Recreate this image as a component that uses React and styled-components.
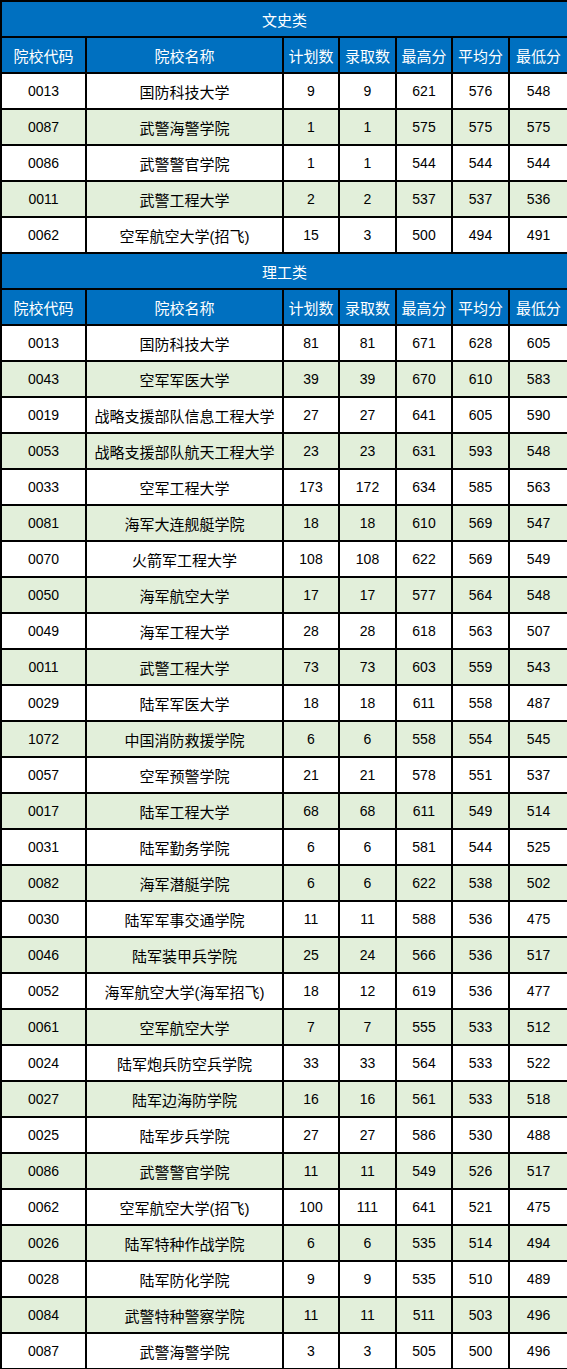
import React from "react";
import styled, { createGlobalStyle } from "styled-components";

const GlobalStyle = createGlobalStyle`
  html, body {
    margin: 0;
    padding: 0;
    background: #ffffff;
  }
  body {
    font-family: "Liberation Sans", "Noto Sans CJK SC", sans-serif;
  }
`;

const columns = ["院校代码", "院校名称", "计划数", "录取数", "最高分", "平均分", "最低分"];
const widths = [85, 197, 56, 57, 56, 57, 59];

const sections = [
  {
    title: "文史类",
    rows: [
      ["0013", "国防科技大学", 9, 9, 621, 576, 548],
      ["0087", "武警海警学院", 1, 1, 575, 575, 575],
      ["0086", "武警警官学院", 1, 1, 544, 544, 544],
      ["0011", "武警工程大学", 2, 2, 537, 537, 536],
      ["0062", "空军航空大学(招飞)", 15, 3, 500, 494, 491],
    ],
  },
  {
    title: "理工类",
    rows: [
      ["0013", "国防科技大学", 81, 81, 671, 628, 605],
      ["0043", "空军军医大学", 39, 39, 670, 610, 583],
      ["0019", "战略支援部队信息工程大学", 27, 27, 641, 605, 590],
      ["0053", "战略支援部队航天工程大学", 23, 23, 631, 593, 548],
      ["0033", "空军工程大学", 173, 172, 634, 585, 563],
      ["0081", "海军大连舰艇学院", 18, 18, 610, 569, 547],
      ["0070", "火箭军工程大学", 108, 108, 622, 569, 549],
      ["0050", "海军航空大学", 17, 17, 577, 564, 548],
      ["0049", "海军工程大学", 28, 28, 618, 563, 507],
      ["0011", "武警工程大学", 73, 73, 603, 559, 543],
      ["0029", "陆军军医大学", 18, 18, 611, 558, 487],
      ["1072", "中国消防救援学院", 6, 6, 558, 554, 545],
      ["0057", "空军预警学院", 21, 21, 578, 551, 537],
      ["0017", "陆军工程大学", 68, 68, 611, 549, 514],
      ["0031", "陆军勤务学院", 6, 6, 581, 544, 525],
      ["0082", "海军潜艇学院", 6, 6, 622, 538, 502],
      ["0030", "陆军军事交通学院", 11, 11, 588, 536, 475],
      ["0046", "陆军装甲兵学院", 25, 24, 566, 536, 517],
      ["0052", "海军航空大学(海军招飞)", 18, 12, 619, 536, 477],
      ["0061", "空军航空大学", 7, 7, 555, 533, 512],
      ["0024", "陆军炮兵防空兵学院", 33, 33, 564, 533, 522],
      ["0027", "陆军边海防学院", 16, 16, 561, 533, 518],
      ["0025", "陆军步兵学院", 27, 27, 586, 530, 488],
      ["0086", "武警警官学院", 11, 11, 549, 526, 517],
      ["0062", "空军航空大学(招飞)", 100, 111, 641, 521, 475],
      ["0026", "陆军特种作战学院", 6, 6, 535, 514, 494],
      ["0028", "陆军防化学院", 9, 9, 535, 510, 489],
      ["0084", "武警特种警察学院", 11, 11, 511, 503, 496],
      ["0087", "武警海警学院", 3, 3, 505, 500, 496],
    ],
  },
];

const Table = styled.table`
  width: 567px;
  table-layout: fixed;
  border-collapse: collapse;
  border: 2px solid #000;
`;

const Row = styled.tr`
  height: 36px;
  background: ${(p) => (p.$shade ? "#e2efda" : "#ffffff")};
`;

const HeadCell = styled.th`
  background: #0070c0;
  color: #ffffff;
  font-weight: normal;
  font-size: 15px;
  text-align: center;
  border: 2px solid #000;
  padding: 0;
`;

const Cell = styled.td`
  font-size: ${(p) => (p.$name ? "15px" : "14px")};
  color: #000;
  text-align: center;
  border: 2px solid #000;
  padding: 0;
  white-space: nowrap;
`;

export default function App() {
  return (
    <>
      <GlobalStyle />
      <Table>
        <colgroup>
          {widths.map((w, i) => (
            <col key={i} style={{ width: w }} />
          ))}
        </colgroup>
        <tbody>
          {sections.map((sec) => (
            <React.Fragment key={sec.title}>
              <Row>
                <HeadCell colSpan={7}>{sec.title}</HeadCell>
              </Row>
              <Row>
                {columns.map((c) => (
                  <HeadCell key={c}>{c}</HeadCell>
                ))}
              </Row>
              {sec.rows.map((r, i) => (
                <Row key={sec.title + i} $shade={i % 2 === 1}>
                  {r.map((v, j) => (
                    <Cell key={j} $name={j === 1}>
                      {v}
                    </Cell>
                  ))}
                </Row>
              ))}
            </React.Fragment>
          ))}
        </tbody>
      </Table>
    </>
  );
}
